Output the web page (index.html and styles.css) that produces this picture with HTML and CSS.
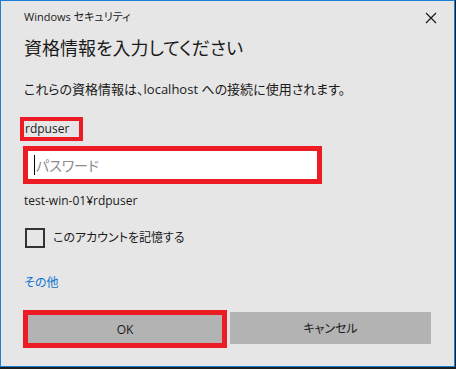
FILE: index.html
```html
<!DOCTYPE html>
<html lang="ja">
<head>
  <meta charset="UTF-8">
  <title>Windows セキュリティ</title>
  <link rel="stylesheet" href="styles.css">
</head>
<body>

  <div class="dialog">
    <div class="titlebar">
      <span class="title">Windows セキュリティ</span>
      <svg class="close" width="12" height="12" viewBox="0 0 12 12">
        <path d="M1 1 L11 11 M11 1 L1 11" stroke="#1a1a1a" stroke-width="1.2" fill="none"/>
      </svg>
    </div>

    <h1>資格情報を入力してください</h1>
    <p class="desc">これらの資格情報は、localhost への接続に使用されます。</p>

    <div class="user"><span class="user-name">rdpuser</span></div>

    <div class="password">
      <span class="caret"></span><span class="placeholder">パスワード</span>
    </div>

    <p class="domain">test-win-01¥rdpuser</p>

    <label class="remember">
      <span class="checkbox"></span>
      <span>このアカウントを記憶する</span>
    </label>

    <a class="more" href="#">その他</a>

    <div class="buttons">
      <div class="ok-mark"><button class="btn">OK</button></div>
      <button class="btn cancel">キャンセル</button>
    </div>
  </div>

</body>
</html>
```

FILE: styles.css
```css
body {
  margin: 0;
  background-color: #1e1e1e;
  font-family: "Open Sans", "Noto Sans CJK JP", sans-serif;
  font-feature-settings: "palt";
  color: #1a1a1a;
}
.dialog {
  width: 455px;
  height: 367px;
  box-sizing: border-box;
  border: 1px solid #1a7fd6;
  background-color: #e6e6e6;
  padding: 0 23px 0 23px;
}
.titlebar {
  height: 30px;
  display: flex;
  align-items: center;
  justify-content: space-between;
}
.title {
  font-size: 11px;
}
.close {
  margin-right: -6px;
  margin-top: 3px;
}
h1 {
  margin: 0;
  font-size: 18px;
  font-weight: normal;
  line-height: 34px;
}
.desc {
  margin: 14px 0 0;
  font-size: 13px;
  line-height: 20px;
}
.user {
  margin-top: 17px;
}
.user-name {
  display: inline-block;
  margin-left: -4px;
  border: 4px solid #ed1c24;
  padding: 0 10px 0 1px;
  font-size: 12px;
  line-height: 16px;
}
.password {
  margin: 5px 0 0 -1px;
  width: 299px;
  height: 38px;
  box-sizing: border-box;
  border: 5px solid #ed1c24;
  background-color: #fff;
  display: flex;
  align-items: center;
  padding-left: 6px;
}
.caret {
  width: 1px;
  height: 20px;
  background-color: #000;
  margin-right: 1px;
}
.placeholder {
  color: #8c8c8c;
  font-size: 14px;
}
.domain {
  margin: 7px 0 0;
  font-size: 12px;
  line-height: 20px;
}
.remember {
  margin-top: 17px;
  display: flex;
  align-items: center;
  gap: 8px;
  font-size: 12px;
  line-height: 20px;
}
.checkbox {
  width: 20px;
  height: 20px;
  box-sizing: border-box;
  margin-left: 1px;
  border: 2px solid #333;
}
.more {
  display: block;
  margin-top: 25px;
  font-size: 12px;
  line-height: 20px;
  color: #0f74cf;
  text-decoration: none;
}
.buttons {
  margin: 17px 0 0 -1px;
  display: flex;
  align-items: flex-start;
  gap: 3px;
}
.ok-mark {
  border: 5px solid #ed1c24;
  width: 204px;
  height: 38px;
  box-sizing: border-box;
}
.btn {
  display: block;
  border: none;
  background-color: #b3b3b3;
  font-family: inherit;
  font-feature-settings: "palt";
  font-size: 12px;
  color: #1a1a1a;
  width: 100%;
  height: 100%;
  padding: 0;
}
.btn.cancel {
  width: 201px;
  height: 32px;
  margin-top: 2px;
}
```
